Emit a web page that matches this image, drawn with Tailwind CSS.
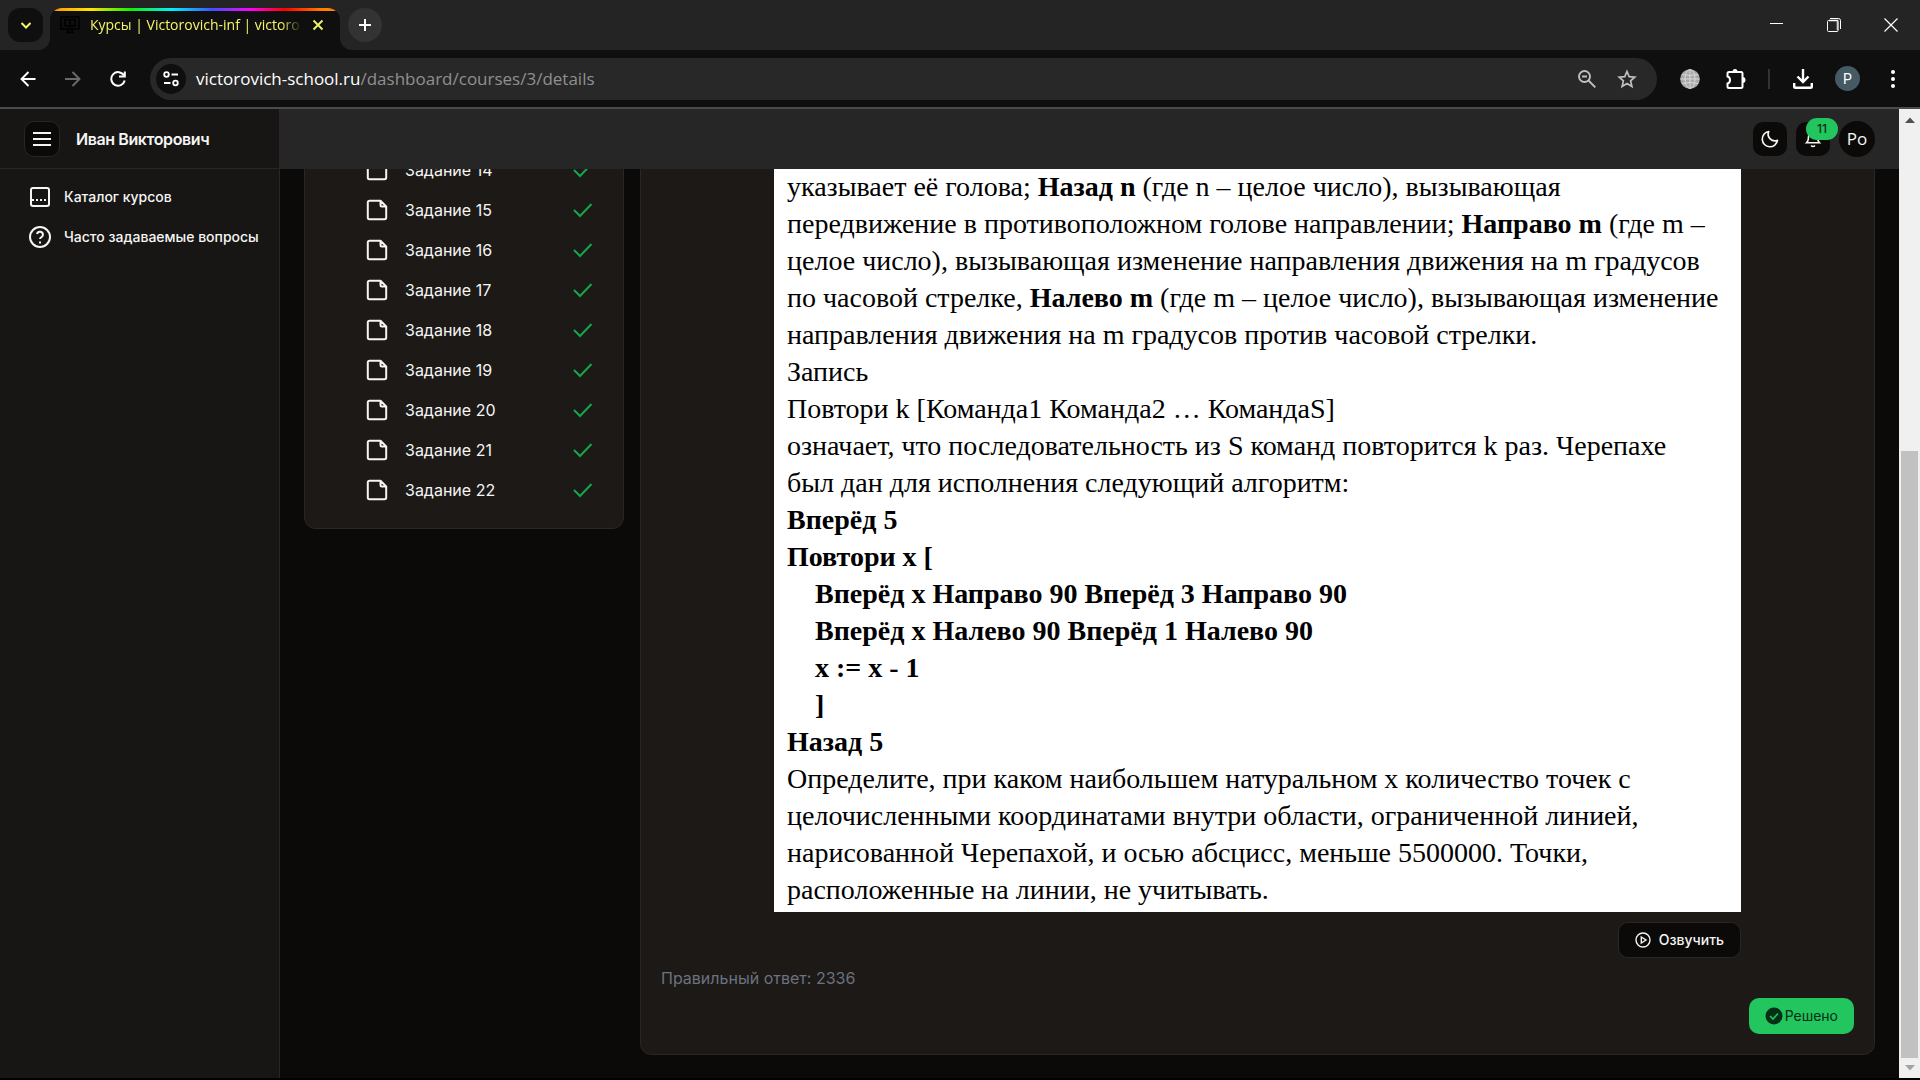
<!DOCTYPE html>
<html lang="ru">
<head>
<meta charset="utf-8">
<title>Курсы | Victorovich-inf</title>
<script src="https://cdn.jsdelivr.net/npm/@tailwindcss/browser@4"></script>
</head>
<body class="flex h-screen flex-col overflow-hidden bg-black font-['Inter',sans-serif] text-[#f5f5f4]">

<!-- Shared icon symbols -->
<svg class="hidden">
  <symbol id="file" viewBox="0 0 24 24"><path d="M4 2.800H15.500L21.200 8.500V19.500A1.700 1.700 0 0 1 19.500 21.200H4.500A1.700 1.700 0 0 1 2.800 19.500V4.500A1.700 1.700 0 0 1 4.500 2.800M15.500 3V7A1.500 1.500 0 0 0 17 8.500H21" fill="none" stroke="currentColor" stroke-width="2" stroke-linejoin="round"/></symbol>
  <symbol id="check" viewBox="0 0 20 16"><path d="M1 8L7 14L18.500 2" fill="none" stroke="currentColor" stroke-width="2.100"/></symbol>
</svg>

<!-- Tab strip -->
<div class="flex h-[50px] shrink-0 items-center bg-[#242424] pl-2 font-['Open_Sans',sans-serif]">
  <button aria-label="Поиск вкладок" class="flex h-[34px] w-[35px] items-center justify-center rounded-xl bg-[#0f0f0f] text-[#f5f56a]">
    <svg class="size-3" viewBox="0 0 12 12"><path d="M1.500 4L6 8.500L10.500 4" fill="none" stroke="currentColor" stroke-width="2"/></svg>
  </button>
  <div class="relative ml-[7px] flex h-[42px] w-[290px] self-end rounded-t-xl bg-[#0f0f0f]">
    <div class="flex h-full w-full flex-col overflow-hidden rounded-t-xl">
      <div class="h-[3px] shrink-0 bg-[linear-gradient(90deg,#ff9000_0%,#ffe600_14%,#10f000_28%,#00f0ff_42%,#4050ff_56%,#ff00ff_69%,#ff0000_81%,#ff8000_94%)]"></div>
      <div class="flex h-7 items-center px-[10px] text-[#f5f56a]">
        <svg class="size-5 shrink-0" viewBox="0 0 20 20" fill="none" stroke="#000" stroke-width="1.500"><path d="M1 2H19V14H1ZM5 4.500H9L10 5.500L11 4.500H15V11H11L10 12L9 11H5ZM10 5.500V12M6 17.500H14M8 14V17M12 14V17"/></svg>
        <span class="ml-[10px] min-w-0 flex-1 overflow-hidden whitespace-nowrap text-sm [mask-image:linear-gradient(90deg,#000_90%,transparent)]">Курсы | Victorovich-inf | victoro</span>
        <button aria-label="Закрыть вкладку" class="ml-2 mr-1 flex size-4 items-center justify-center">
          <svg class="size-3" viewBox="0 0 12 12"><path d="M1.500 1.500L10.500 10.500M10.500 1.500L1.500 10.500" stroke="currentColor" stroke-width="1.800"/></svg>
        </button>
      </div>
    </div>
    <svg class="absolute -left-3 bottom-0 size-3" viewBox="0 0 12 12"><path d="M12 0V12H0A12 12 0 0 0 12 0" fill="#0f0f0f"/></svg>
    <svg class="absolute -right-3 bottom-0 size-3" viewBox="0 0 12 12"><path d="M0 0V12H12A12 12 0 0 1 0 0" fill="#0f0f0f"/></svg>
  </div>
  <button aria-label="Новая вкладка" class="ml-2 flex size-[34px] items-center justify-center rounded-full bg-[#333]">
    <svg class="size-3" viewBox="0 0 12 12"><path d="M6 0V12M0 6H12" stroke="#fff" stroke-width="2"/></svg>
  </button>
  <div class="ml-auto flex h-full pr-px">
    <button aria-label="Свернуть" class="flex w-[57px] items-center justify-center"><svg class="size-[14px]" viewBox="0 0 14 14"><path d="M0 5.500H13" stroke="#fff"/></svg></button>
    <button aria-label="Развернуть" class="flex w-[57px] items-center justify-center"><svg class="size-[14px]" viewBox="0 0 14 14" fill="none" stroke="#fff"><path d="M3 .5H11.500Q13.500 .5 13.500 2.500V11"/><path d="M2 2.500H10.500V12" stroke="#999" stroke-width="2"/><rect x=".5" y="2.500" width="10.500" height="11" rx="1"/></svg></button>
    <button aria-label="Закрыть" class="flex w-[57px] items-center justify-center"><svg class="size-[14px]" viewBox="0 0 14 14"><path d="M.5 .5L13.500 13.500M13.500 .5L.5 13.500" stroke="#fff" stroke-width="1.200"/></svg></button>
  </div>
</div>

<!-- Toolbar -->
<div class="flex h-[59px] shrink-0 items-center border-b-2 border-[#4b4b4b] bg-[#0f0f0f] px-[5px] font-['Open_Sans',sans-serif]">
  <button aria-label="Назад" class="flex w-[45px] justify-center"><svg class="size-4" viewBox="0 0 16 16" fill="none" stroke="#fff" stroke-width="1.900"><path d="M15.500 8H2M8.500 1L1.500 8L8.500 15"/></svg></button>
  <button aria-label="Вперёд" class="flex w-[45px] justify-center"><svg class="size-4" viewBox="0 0 16 16" fill="none" stroke="#6b6b6b" stroke-width="1.900"><path d="M0 8H14M7.500 1L14.500 8L7.500 15"/></svg></button>
  <button aria-label="Обновить" class="flex w-[45px] justify-center"><svg class="size-4" viewBox="0 0 16 16" fill="none" stroke="#fff" stroke-width="2"><path d="M14 4.500A6.800 6.800 0 1 0 14.700 9.500"/><path d="M14.800 .5V5.500H9"/></svg></button>
  <div class="ml-[10px] flex h-[42px] min-w-0 flex-1 items-center rounded-full bg-[#282828] pl-[6px] pr-5">
    <button aria-label="Сведения о сайте" class="flex size-[30px] items-center justify-center rounded-full bg-[#0f0f0f]">
      <svg class="size-4" viewBox="0 0 16 16" fill="none" stroke="#fff" stroke-width="1.800"><circle cx="3.500" cy="3.500" r="2.300"/><path d="M8.500 3.500H15M1 12H7.500"/><circle cx="12.500" cy="12" r="2.300"/></svg>
    </button>
    <p class="ml-[10px] flex-1 text-[17px] text-[#909090]"><span class="text-white">victorovich-school.ru</span>/dashboard/courses/3/details</p>
    <button aria-label="Масштаб"><svg class="size-[18px]" viewBox="0 0 18 18" fill="none" stroke="#c0c0c0" stroke-width="1.900"><circle cx="6.500" cy="6.500" r="5.500"/><path d="M10.500 10.500L17.300 17.300M4 6.500H9"/></svg></button>
    <button aria-label="Добавить в закладки" class="ml-[21px]"><svg class="size-5" viewBox="0 0 20 20" fill="none" stroke="#c0c0c0" stroke-width="1.700"><path d="M10 2.500L12.200 7.700L17.800 8.200L13.600 11.900L14.900 17.400L10 14.500L5.100 17.400L6.400 11.900L2.200 8.200L7.800 7.700Z"/></svg></button>
  </div>
  <button aria-label="Расширение" class="ml-[10px] flex w-[45px] justify-center"><svg class="size-5" viewBox="0 0 20 20" fill="none" stroke="#d8d8d8" stroke-width="1"><circle cx="10" cy="10" r="9.800" fill="#a9a9a9" stroke="none"/><ellipse cx="10" cy="10" rx="5" ry="9.500"/><path d="M10 .5V19.500M.5 10H19.500M2 5.500Q10 7.500 18 5.500M2 14.500Q10 12.500 18 14.500"/></svg></button>
  <button aria-label="Расширения" class="flex w-[45px] justify-center"><svg class="size-[22px]" viewBox="0 0 22 22"><path d="M3.500 5.500A1.500 1.500 0 0 1 5 4H17A1.500 1.500 0 0 1 18.500 5.500V18.500A1.500 1.500 0 0 1 17 20H5A1.500 1.500 0 0 1 3.500 18.500V15.500Q6 15 6 12T3.500 8.500Z" fill="none" stroke="#fff" stroke-width="2"/><path d="M8.500 4A2.500 3 0 0 1 13.500 4ZM18.500 9A3 3 0 0 1 18.500 15Z" fill="#fff"/></svg></button>
  <div class="flex w-[23px] justify-center"><div class="h-5 w-[2px] bg-[#333]"></div></div>
  <button aria-label="Загрузки" class="flex w-[45px] justify-center"><svg class="size-5" viewBox="0 0 20 20" fill="none" stroke="#fff" stroke-width="2.400"><path d="M10 0V12.500M4.500 7.500L10 13L15.500 7.500M1.200 14V17.500Q1.200 18.800 2.500 18.800H17.500Q18.800 18.800 18.800 17.500V14"/></svg></button>
  <button aria-label="Профиль" class="flex w-[45px] justify-center"><span class="flex size-[25px] items-center justify-center rounded-full bg-[#455a64] font-['Roboto',sans-serif] text-sm text-white">P</span></button>
  <button aria-label="Меню" class="flex w-[45px] justify-center"><svg class="h-[18px] w-1" viewBox="0 0 4 18" fill="#fff"><circle cx="2" cy="2" r="2"/><circle cx="2" cy="9" r="2"/><circle cx="2" cy="16" r="2"/></svg></button>
</div>

<!-- Page viewport -->
<div class="mb-[2px] flex min-h-0 flex-1 bg-[#0b0a08]">
  <aside class="flex w-[280px] shrink-0 flex-col border-r border-[#27272a] bg-[#171614]">
    <div class="flex h-[60px] shrink-0 items-center gap-4 border-b border-[#27272a] pl-6">
      <button aria-label="Свернуть меню" class="flex size-9 items-center justify-center rounded-[10px] border border-[#27272a] bg-[#0b0a08]">
        <svg class="h-4 w-[18px]" viewBox="0 0 18 16"><path d="M0 2H18M0 8H18M0 14H18" stroke="currentColor" stroke-width="2"/></svg>
      </button>
      <span class="text-base font-semibold tracking-tight">Иван Викторович</span>
    </div>
    <nav class="flex flex-col pt-2 text-sm font-medium">
      <a href="#" class="flex h-10 items-center gap-3 pl-7"><svg class="size-6" viewBox="0 0 24 24" fill="none" stroke="currentColor" stroke-width="2"><rect x="3" y="3" width="18" height="18" rx="2"/><path d="M4 15H20" stroke-dasharray="2 2"/></svg>Каталог курсов</a>
      <a href="#" class="flex h-10 items-center gap-3 whitespace-nowrap pl-7"><svg class="size-6" viewBox="0 0 24 24" fill="none" stroke="currentColor" stroke-width="2"><circle cx="12" cy="12" r="10"/><path d="M9 9A3 3 0 0 1 14.900 10C14.900 12 12 12.500 12 14M12 16.500V18.500"/></svg>Часто задаваемые вопросы</a>
    </nav>
  </aside>

  <div class="flex min-w-0 flex-1 flex-col">
    <header class="flex h-[60px] shrink-0 items-center justify-end gap-[9px] bg-[#262626] pr-6">
      <button aria-label="Тёмная тема" class="flex size-[34px] items-center justify-center rounded-[10px] bg-[#0b0a08]">
        <svg class="size-5" viewBox="0 0 24 24" fill="none" stroke="currentColor" stroke-width="2" stroke-linejoin="round"><path d="M10.500 3A8 8 0 0 0 21 13.500A9.200 9.200 0 1 1 10.500 3Z"/></svg>
      </button>
      <button aria-label="Уведомления" class="relative flex size-[34px] items-center justify-center rounded-[10px] bg-[#0b0a08]">
        <svg class="size-[18px]" viewBox="0 0 18 18" fill="none" stroke="currentColor" stroke-width="1.500"><path d="M2.500 12.800H15.500Q13.500 11 13.500 6.500A4.500 4.500 0 0 0 4.500 6.500Q4.500 11 2.500 12.800ZM7 15.500Q9 17.500 11 15.500"/></svg>
        <span class="absolute -top-1 left-[10px] flex h-[22px] w-8 items-center justify-center rounded-full bg-[#22c55e] text-xs font-medium text-[#052e16]">11</span>
      </button>
      <button class="flex size-9 items-center justify-center rounded-full bg-[#0b0a08] text-[17px] font-['Open_Sans',sans-serif]">Po</button>
    </header>

    <main class="flex min-h-0 flex-1 items-start gap-4 overflow-hidden px-6">
      <div class="w-80 shrink-0 overflow-hidden rounded-b-xl border border-t-0 border-[#27272a] bg-[#1c1917]">
        <ul class="-mt-[19px] pb-[18px] pl-[60px] pr-[30px]">
          <li class="flex h-10 items-center gap-4"><svg class="size-6"><use href="#file"/></svg><a href="#" class="flex-1">Задание 14</a><svg class="h-4 w-5 text-[#16a34a]"><use href="#check"/></svg></li>
          <li class="flex h-10 items-center gap-4"><svg class="size-6"><use href="#file"/></svg><a href="#" class="flex-1">Задание 15</a><svg class="h-4 w-5 text-[#16a34a]"><use href="#check"/></svg></li>
          <li class="flex h-10 items-center gap-4"><svg class="size-6"><use href="#file"/></svg><a href="#" class="flex-1">Задание 16</a><svg class="h-4 w-5 text-[#16a34a]"><use href="#check"/></svg></li>
          <li class="flex h-10 items-center gap-4"><svg class="size-6"><use href="#file"/></svg><a href="#" class="flex-1">Задание 17</a><svg class="h-4 w-5 text-[#16a34a]"><use href="#check"/></svg></li>
          <li class="flex h-10 items-center gap-4"><svg class="size-6"><use href="#file"/></svg><a href="#" class="flex-1">Задание 18</a><svg class="h-4 w-5 text-[#16a34a]"><use href="#check"/></svg></li>
          <li class="flex h-10 items-center gap-4"><svg class="size-6"><use href="#file"/></svg><a href="#" class="flex-1">Задание 19</a><svg class="h-4 w-5 text-[#16a34a]"><use href="#check"/></svg></li>
          <li class="flex h-10 items-center gap-4"><svg class="size-6"><use href="#file"/></svg><a href="#" class="flex-1">Задание 20</a><svg class="h-4 w-5 text-[#16a34a]"><use href="#check"/></svg></li>
          <li class="flex h-10 items-center gap-4"><svg class="size-6"><use href="#file"/></svg><a href="#" class="flex-1">Задание 21</a><svg class="h-4 w-5 text-[#16a34a]"><use href="#check"/></svg></li>
          <li class="flex h-10 items-center gap-4"><svg class="size-6"><use href="#file"/></svg><a href="#" class="flex-1">Задание 22</a><svg class="h-4 w-5 text-[#16a34a]"><use href="#check"/></svg></li>
        </ul>
      </div>

      <section class="min-w-0 flex-1 rounded-b-xl border border-t-0 border-[#27272a] bg-[#1c1917] px-5 pb-5">
        <div class="mx-auto flex max-w-[967px] flex-col items-end">
          <div class="-mt-px w-full bg-white pb-1 pl-[13px] pr-4 font-['Liberation_Serif',serif] text-[28px] leading-[37px] text-black">
            <p>указывает её голова; <b>Назад n</b> (где n – целое число), вызывающая<br>передвижение в противоположном голове направлении; <b>Направо m</b> (где m –<br>целое число), вызывающая изменение направления движения на m градусов<br>по часовой стрелке, <b>Налево m</b> (где m – целое число), вызывающая изменение<br>направления движения на m градусов против часовой стрелки.</p>
            <p>Запись</p>
            <p>Повтори k [Команда1 Команда2 … КомандаS]</p>
            <p>означает, что последовательность из S команд повторится k раз. Черепахе<br>был дан для исполнения следующий алгоритм:</p>
            <div class="font-bold">
              <p>Вперёд 5</p>
              <p>Повтори x [</p>
              <div class="pl-7">
                <p>Вперёд x Направо 90 Вперёд 3 Направо 90</p>
                <p>Вперёд x Налево 90 Вперёд 1 Налево 90</p>
                <p>x := x - 1</p>
                <p>]</p>
              </div>
              <p>Назад 5</p>
            </div>
            <p>Определите, при каком наибольшем натуральном x количество точек с<br>целочисленными координатами внутри области, ограниченной линией,<br>нарисованной Черепахой, и осью абсцисс, меньше 5500000. Точки,<br>расположенные на линии, не учитывать.</p>
          </div>
          <button class="mt-[10px] flex h-9 items-center gap-2 rounded-[10px] border border-[#27272a] bg-[#0b0a08] px-4 text-sm font-medium">
            <svg class="size-4" viewBox="0 0 16 16" fill="none" stroke="currentColor" stroke-width="1.400"><circle cx="8" cy="8" r="7"/><path d="M6.300 5L11 8L6.300 11Z"/></svg>Озвучить
          </button>
        </div>
        <p class="mt-2 leading-6 text-[#6b7280]">Правильный ответ: 2336</p>
        <div class="mt-2 flex justify-end">
          <button class="flex h-9 items-center gap-[2px] rounded-[10px] bg-[#22c55e] px-4 text-sm text-[#052e16]">
            <svg class="size-[18px]" viewBox="0 0 18 18"><circle cx="9" cy="9" r="8.500" fill="#052e16"/><path d="M5 9L8 12L13 6.500" fill="none" stroke="#22c55e" stroke-width="1.600"/></svg>Решено
          </button>
        </div>
      </section>
    </main>
  </div>

  <!-- Scroll bar -->
  <div class="flex w-[21px] shrink-0 flex-col items-center bg-[#f0f0f0]">
    <svg class="h-[21px] w-[10px] shrink-0" viewBox="0 0 10 21"><path d="M0 14L5 8.500L10 14Z" fill="#505050"/></svg>
    <div class="flex-[321]"></div>
    <div class="w-[17px] flex-[607] bg-[#c1c1c1]"></div>
    <svg class="h-[20px] w-[10px] shrink-0" viewBox="0 0 10 20"><path d="M0 7L5 12.500L10 7Z" fill="#a3a3a3"/></svg>
  </div>
</div>
</body>
</html>
